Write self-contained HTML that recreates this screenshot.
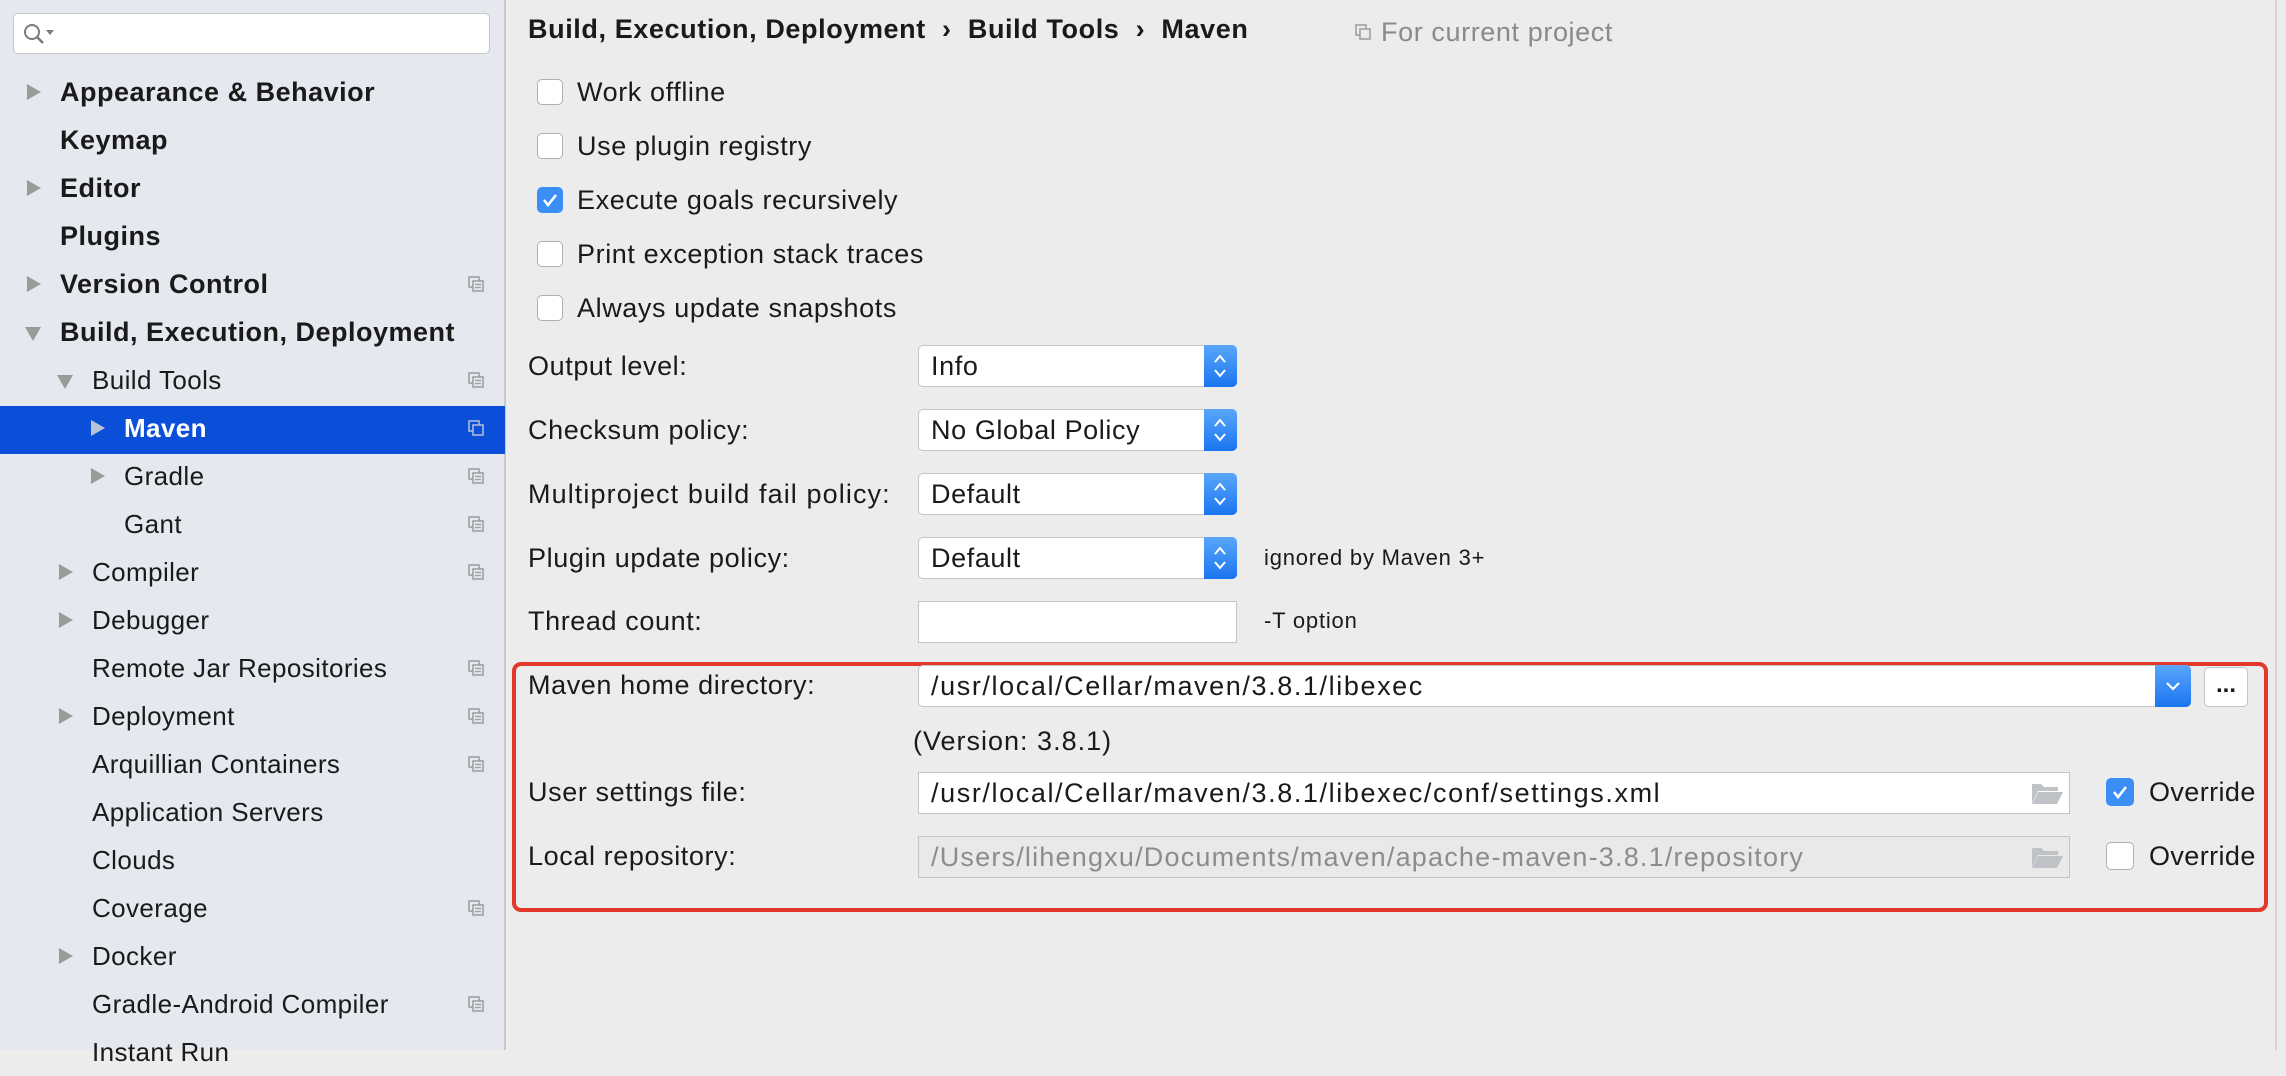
<!DOCTYPE html>
<html><head><meta charset="utf-8"><style>
*{box-sizing:border-box;margin:0;padding:0}
body{width:2286px;height:1050px;overflow:hidden;background:#ececec;font-family:"Liberation Sans",sans-serif;color:#1a1a1a;position:relative}
.side{position:absolute;left:0;top:0;width:506px;height:1050px;background:#e5e9ef;border-right:2px solid #c8c8c8}
.a{position:absolute;white-space:nowrap}
.t{position:absolute;white-space:nowrap;font-size:26px;line-height:48px;height:48px;letter-spacing:0.4px}
.b{font-weight:bold;font-size:27px;letter-spacing:0.5px}
.arr{position:absolute;width:0;height:0;border-top:8px solid transparent;border-bottom:8px solid transparent;border-left:14px solid #9a9a9a}
.arrd{position:absolute;width:0;height:0;border-left:8px solid transparent;border-right:8px solid transparent;border-top:14px solid #9a9a9a}
.cp{position:absolute;left:468px;width:16px;height:16px}
.sel{position:absolute;left:0;top:406px;width:505px;height:48px;background:#0b4fd8}
.cb{position:absolute;width:26px;height:26px;border:1px solid #b0b0b0;border-radius:5px;background:#fff}
.cbc{background:#3b8ef5;border-color:#3b8ef5}
.lbl{position:absolute;font-size:27px;white-space:nowrap;line-height:40px;letter-spacing:0.6px}
.combo{position:absolute;left:918px;width:319px;height:42px;background:#fff;border:1px solid #c4c4c4;border-radius:5px;font-size:27px;line-height:40px;padding-left:12px;letter-spacing:0.6px}
.combo .bt{position:absolute;right:-1px;top:-1px;width:33px;height:42px;background:linear-gradient(#5aa7fb,#1b74f0);border-radius:0 5px 5px 0}
.field{position:absolute;background:#fff;border:1px solid #c4c4c4;font-size:27px;line-height:40px;padding-left:12px;height:42px;letter-spacing:1.6px;white-space:nowrap}
.small{font-size:22px;letter-spacing:0.8px}
</style></head><body>
<div class="side">
 <div class="a" style="left:13px;top:13px;width:477px;height:41px;background:#fff;border:1px solid #c6c6c6;border-radius:5px"></div>
 <svg class="a" style="left:22px;top:22px" width="34" height="24" viewBox="0 0 34 24"><circle cx="10" cy="10" r="7" fill="none" stroke="#7a7a7a" stroke-width="2"/><line x1="15" y1="15" x2="21" y2="21" stroke="#7a7a7a" stroke-width="2.5"/><path d="M24 8h8l-4 5z" fill="#7a7a7a"/></svg>
 <div class="sel"></div>
 <div class="arr" style="left:27px;top:84px"></div><div class="t b" style="left:60px;top:68px">Appearance &amp; Behavior</div>
 <div class="t b" style="left:60px;top:116px">Keymap</div>
 <div class="arr" style="left:27px;top:180px"></div><div class="t b" style="left:60px;top:164px">Editor</div>
 <div class="t b" style="left:60px;top:212px">Plugins</div>
 <div class="arr" style="left:27px;top:276px"></div><div class="t b" style="left:60px;top:260px">Version Control</div>
 <div class="arrd" style="left:25px;top:327px"></div><div class="t b" style="left:60px;top:308px">Build, Execution, Deployment</div>
 <div class="arrd" style="left:57px;top:375px"></div><div class="t" style="left:92px;top:356px">Build Tools</div>
 <div class="arr" style="left:91px;top:420px;border-left-color:#b8c3d8"></div><div class="t" style="left:124px;top:404px;color:#fff;font-weight:bold">Maven</div>
 <div class="arr" style="left:91px;top:468px"></div><div class="t" style="left:124px;top:452px">Gradle</div>
 <div class="t" style="left:124px;top:500px">Gant</div>
 <div class="arr" style="left:59px;top:564px"></div><div class="t" style="left:92px;top:548px">Compiler</div>
 <div class="arr" style="left:59px;top:612px"></div><div class="t" style="left:92px;top:596px">Debugger</div>
 <div class="t" style="left:92px;top:644px">Remote Jar Repositories</div>
 <div class="arr" style="left:59px;top:708px"></div><div class="t" style="left:92px;top:692px">Deployment</div>
 <div class="t" style="left:92px;top:740px">Arquillian Containers</div>
 <div class="t" style="left:92px;top:788px">Application Servers</div>
 <div class="t" style="left:92px;top:836px">Clouds</div>
 <div class="t" style="left:92px;top:884px">Coverage</div>
 <div class="arr" style="left:59px;top:948px"></div><div class="t" style="left:92px;top:932px">Docker</div>
 <div class="t" style="left:92px;top:980px">Gradle-Android Compiler</div>
 <div class="t" style="left:92px;top:1028px">Instant Run</div>
 <svg width="0" height="0" style="position:absolute"><defs><g id="cpi"><rect x="1" y="1" width="10" height="10" fill="none" stroke="#a0a0a0" stroke-width="1.6"/><rect x="5" y="5" width="10" height="10" fill="#e5e9ef" stroke="#a0a0a0" stroke-width="1.6"/><line x1="7" y1="8.5" x2="13" y2="8.5" stroke="#a0a0a0" stroke-width="1.4"/><line x1="7" y1="11.5" x2="13" y2="11.5" stroke="#a0a0a0" stroke-width="1.4"/></g></defs></svg>
 <svg class="cp" style="top:276px" viewBox="0 0 16 16"><use href="#cpi"/></svg>
 <svg class="cp" style="top:372px" viewBox="0 0 16 16"><use href="#cpi"/></svg>
 <svg class="cp" style="top:420px" viewBox="0 0 16 16"><g><rect x="1" y="1" width="10" height="10" fill="none" stroke="#aab8d8" stroke-width="1.6"/><rect x="5" y="5" width="10" height="10" fill="#0b4fd8" stroke="#aab8d8" stroke-width="1.6"/></g></svg>
 <svg class="cp" style="top:468px" viewBox="0 0 16 16"><use href="#cpi"/></svg>
 <svg class="cp" style="top:516px" viewBox="0 0 16 16"><use href="#cpi"/></svg>
 <svg class="cp" style="top:564px" viewBox="0 0 16 16"><use href="#cpi"/></svg>
 <svg class="cp" style="top:660px" viewBox="0 0 16 16"><use href="#cpi"/></svg>
 <svg class="cp" style="top:708px" viewBox="0 0 16 16"><use href="#cpi"/></svg>
 <svg class="cp" style="top:756px" viewBox="0 0 16 16"><use href="#cpi"/></svg>
 <svg class="cp" style="top:900px" viewBox="0 0 16 16"><use href="#cpi"/></svg>
 <svg class="cp" style="top:996px" viewBox="0 0 16 16"><use href="#cpi"/></svg>
</div>

<div class="a b" style="left:528px;top:12px;line-height:34px;letter-spacing:0.6px">Build, Execution, Deployment &nbsp;›&nbsp; Build Tools &nbsp;›&nbsp; Maven</div>
<svg class="a" style="left:1355px;top:24px" width="16" height="16" viewBox="0 0 16 16"><rect x="1" y="1" width="10" height="10" fill="none" stroke="#a0a0a0" stroke-width="1.6"/><rect x="5" y="5" width="10" height="10" fill="#ececec" stroke="#a0a0a0" stroke-width="1.6"/></svg>
<div class="a" style="left:1381px;top:15px;font-size:27px;color:#8a8a8a;line-height:34px;letter-spacing:0.6px">For current project</div>

<div class="cb" style="left:537px;top:79px"></div><div class="lbl" style="left:577px;top:72px">Work offline</div>
<div class="cb" style="left:537px;top:133px"></div><div class="lbl" style="left:577px;top:126px">Use plugin registry</div>
<div class="cb cbc" style="left:537px;top:187px"><svg width="24" height="24" viewBox="0 0 24 24"><path d="M6 12l4 5 8-10" fill="none" stroke="#fff" stroke-width="2.6"/></svg></div><div class="lbl" style="left:577px;top:180px">Execute goals recursively</div>
<div class="cb" style="left:537px;top:241px"></div><div class="lbl" style="left:577px;top:234px">Print exception stack traces</div>
<div class="cb" style="left:537px;top:295px"></div><div class="lbl" style="left:577px;top:288px">Always update snapshots</div>

<div class="lbl" style="left:528px;top:346px">Output level:</div>
<div class="combo" style="top:345px">Info<div class="bt"><svg width="33" height="42" viewBox="0 0 33 42"><path d="M11 17l5-6 5 6M11 25l5 6 5-6" fill="none" stroke="#fff" stroke-width="2"/></svg></div></div>
<div class="lbl" style="left:528px;top:410px">Checksum policy:</div>
<div class="combo" style="top:409px">No Global Policy<div class="bt"><svg width="33" height="42" viewBox="0 0 33 42"><path d="M11 17l5-6 5 6M11 25l5 6 5-6" fill="none" stroke="#fff" stroke-width="2"/></svg></div></div>
<div class="lbl" style="left:528px;top:474px;letter-spacing:1.1px">Multiproject build fail policy:</div>
<div class="combo" style="top:473px">Default<div class="bt"><svg width="33" height="42" viewBox="0 0 33 42"><path d="M11 17l5-6 5 6M11 25l5 6 5-6" fill="none" stroke="#fff" stroke-width="2"/></svg></div></div>
<div class="lbl" style="left:528px;top:538px">Plugin update policy:</div>
<div class="combo" style="top:537px">Default<div class="bt"><svg width="33" height="42" viewBox="0 0 33 42"><path d="M11 17l5-6 5 6M11 25l5 6 5-6" fill="none" stroke="#fff" stroke-width="2"/></svg></div></div>
<div class="lbl small" style="left:1264px;top:538px">ignored by Maven 3+</div>
<div class="lbl" style="left:528px;top:601px">Thread count:</div>
<div class="field" style="left:918px;top:601px;width:319px"></div>
<div class="lbl small" style="left:1264px;top:601px">-T option</div>

<div class="a" style="left:512px;top:662px;width:1756px;height:250px;border:4px solid #e3372c;border-radius:9px"></div>
<div class="lbl" style="left:528px;top:665px">Maven home directory:</div>
<div class="field" style="left:918px;top:665px;width:1273px;border-radius:5px">/usr/local/Cellar/maven/3.8.1/libexec<div style="position:absolute;right:-1px;top:-1px;width:36px;height:42px;background:linear-gradient(#5aa7fb,#1b74f0);border-radius:0 5px 5px 0"><svg width="36" height="42" viewBox="0 0 36 42"><path d="M12 18l6 6 6-6" fill="none" stroke="#fff" stroke-width="2.2"/></svg></div></div>
<div class="a" style="left:2204px;top:667px;width:44px;height:40px;background:#fff;border:1px solid #c4c4c4;border-radius:5px;text-align:center;font-size:24px;font-weight:bold;line-height:34px">...</div>
<div class="lbl" style="left:913px;top:721px;letter-spacing:1px">(Version: 3.8.1)</div>
<div class="lbl" style="left:528px;top:772px">User settings file:</div>
<div class="field" style="left:918px;top:772px;width:1152px">/usr/local/Cellar/maven/3.8.1/libexec/conf/settings.xml</div>
<svg class="a" style="left:2031px;top:781px" width="32" height="24" viewBox="0 0 32 24"><path d="M1 3h9l3 3h14v4H7L1 22z" fill="#bfc2c6"/><path d="M7 11h25l-6 12H1z" fill="#bfc2c6"/></svg>
<div class="cb cbc" style="left:2106px;top:778px;width:28px;height:28px"><svg width="26" height="26" viewBox="0 0 26 26"><path d="M7 13l4 5 8-10" fill="none" stroke="#fff" stroke-width="2.6"/></svg></div>
<div class="lbl" style="left:2149px;top:772px;letter-spacing:0.4px">Override</div>
<div class="lbl" style="left:528px;top:836px">Local repository:</div>
<div class="field" style="left:918px;top:836px;width:1152px;background:#e9e9e9;color:#8c8c8c;letter-spacing:1.2px">/Users/lihengxu/Documents/maven/apache-maven-3.8.1/repository</div>
<svg class="a" style="left:2031px;top:845px" width="32" height="24" viewBox="0 0 32 24"><path d="M1 3h9l3 3h14v4H7L1 22z" fill="#bfc2c6"/><path d="M7 11h25l-6 12H1z" fill="#bfc2c6"/></svg>
<div class="cb" style="left:2106px;top:842px;width:28px;height:28px"></div>
<div class="lbl" style="left:2149px;top:836px;letter-spacing:0.4px">Override</div>
<div class="a" style="left:2275px;top:0;width:2px;height:1050px;background:#d4d4d4"></div>
</body></html>
